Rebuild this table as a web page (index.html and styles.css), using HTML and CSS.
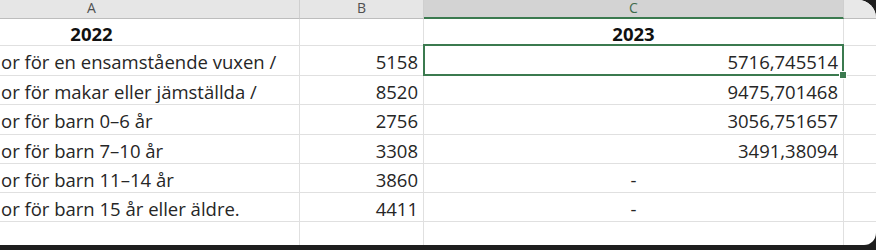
FILE: index.html
```html
<!DOCTYPE html>
<html lang="sv">
<head>
<meta charset="utf-8">
<title>Kalkylblad</title>
<link rel="stylesheet" href="styles.css">
</head>
<body>
<div class="window">
  <div class="sheet">
    <div class="hd col-a">A</div>
    <div class="hd col-b">B</div>
    <div class="hd col-c sel-col">C</div>
    <div class="hd col-x"></div>

    <div class="c r1 ta"><b>2022</b></div>
    <div class="c r1"></div>
    <div class="c r1 tc"><b>2023</b></div>
    <div class="c r1 x"></div>

    <div class="c r2 tl">or för en ensamstående vuxen /</div>
    <div class="c r2 tr">5158</div>
    <div class="c r2 tr active">5716,745514<span class="handle"></span></div>
    <div class="c r2 x"></div>

    <div class="c r3 tl">or för makar eller jämställda /</div>
    <div class="c r3 tr">8520</div>
    <div class="c r3 tr">9475,701468</div>
    <div class="c r3 x"></div>

    <div class="c r4 tl">or för barn 0–6 år</div>
    <div class="c r4 tr">2756</div>
    <div class="c r4 tr">3056,751657</div>
    <div class="c r4 x"></div>

    <div class="c r5 tl">or för barn 7–10 år</div>
    <div class="c r5 tr">3308</div>
    <div class="c r5 tr">3491,38094</div>
    <div class="c r5 x"></div>

    <div class="c r6 tl">or för barn 11–14 år</div>
    <div class="c r6 tr">3860</div>
    <div class="c r6 tc">-</div>
    <div class="c r6 x"></div>

    <div class="c r7 tl">or för barn 15 år eller äldre.</div>
    <div class="c r7 tr">4411</div>
    <div class="c r7 tc">-</div>
    <div class="c r7 x"></div>

    <div class="c r8"></div>
    <div class="c r8"></div>
    <div class="c r8"></div>
    <div class="c r8 x"></div>
  </div>
</div>
</body>
</html>
```
FILE: styles.css
```css
html, body {
  margin: 0;
  padding: 0;
  background: #1e1e1e;
}
.window {
  width: 876px;
  height: 245px;
  background: #ffffff;
  border-top-right-radius: 18px;
  border-bottom-right-radius: 12px;
  overflow: hidden;
}
.sheet {
  display: grid;
  grid-template-columns: 300px 124px 420px 1fr;
  grid-template-rows: 19px 27px 30px 29px 30px 29px 29px 29px 30px;
  font-family: "Open Sans", "Liberation Sans", sans-serif;
  font-size: 18.5px;
  color: #262626;
}
.hd {
  background: #e6e6e6;
  border-right: 1px solid #cfcfcf;
  border-bottom: 1px solid #bdbdbd;
  color: #505050;
  font-size: 14px;
  line-height: 16px;
  text-align: center;
  box-sizing: border-box;
}
.hd.col-a { padding-right: 116px; }
.hd.sel-col {
  background: #d3d3d3;
  color: #3f6b4c;
  border-bottom: 2px solid #3b7a4f;
}
.hd.col-x { border-right: 0; background: #e8e8e8; }
.c {
  box-sizing: border-box;
  border-right: 1px solid #e0e0e0;
  border-bottom: 1px solid #e0e0e0;
  display: flex;
  align-items: center;
  padding-top: 2px;
  white-space: nowrap;
  overflow: hidden;
}
.c.x { border-right: 0; }
.tl { padding-left: 1px; }
.tr { justify-content: flex-end; padding-right: 5px; }
.tc { justify-content: center; }
.ta { justify-content: center; padding-right: 116px; }
.c b { font-weight: 700; color: #111111; }
.active {
  position: relative;
  overflow: visible;
}
.active::after {
  content: "";
  position: absolute;
  left: -1px;
  top: -2px;
  right: -1px;
  bottom: -1px;
  border: 2px solid #3b7a4f;
}
.handle {
  position: absolute;
  right: -4px;
  bottom: -4px;
  width: 6px;
  height: 6px;
  background: #3b7a4f;
  border: 1px solid #ffffff;
  z-index: 2;
}
```
